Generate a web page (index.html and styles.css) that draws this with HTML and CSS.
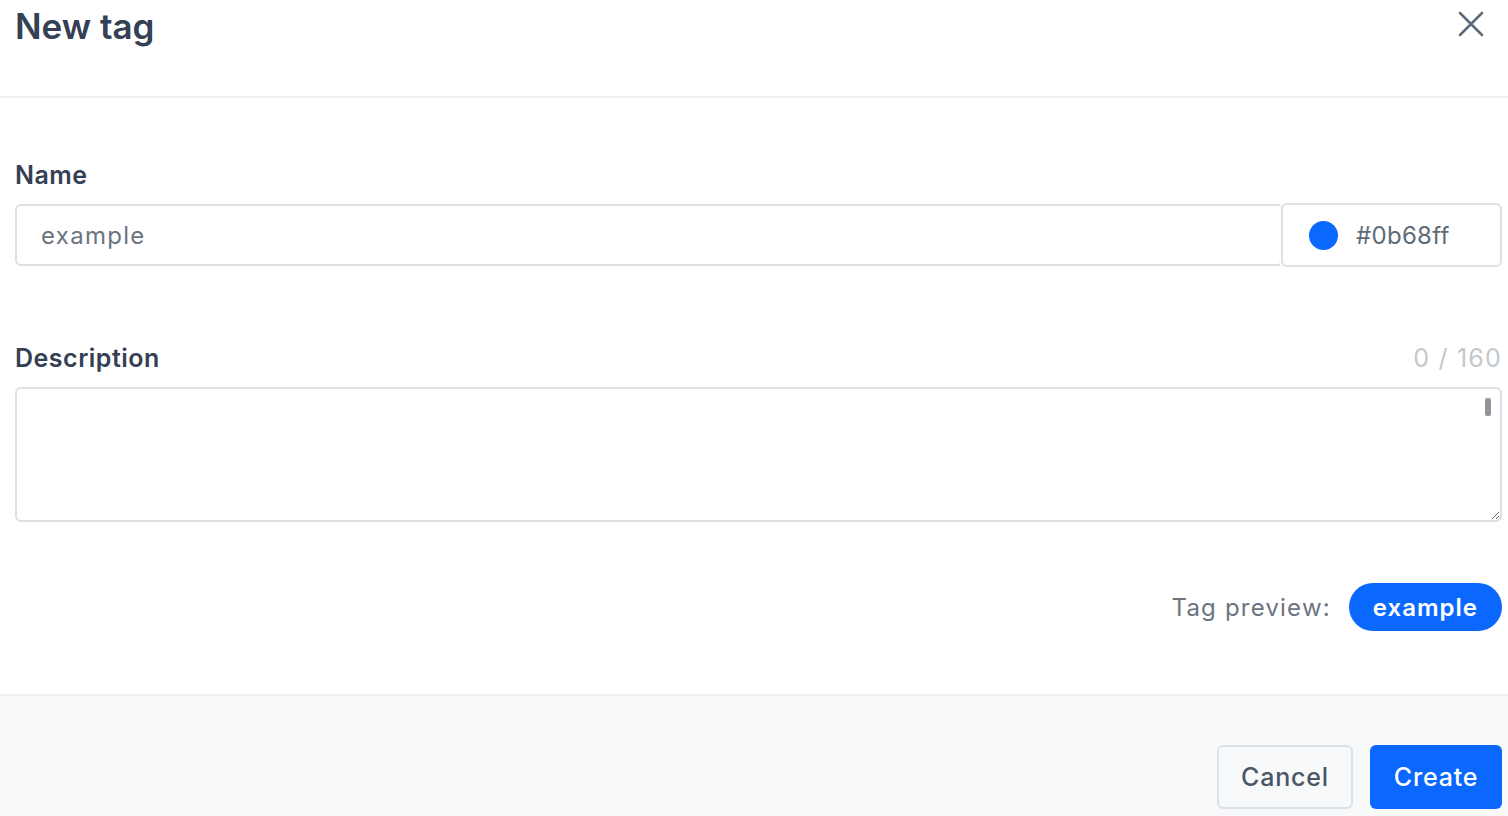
FILE: index.html
```html
<!DOCTYPE html>
<html lang="en">

<head>
    <meta charset="UTF-8">
    <meta name="viewport" content="width=device-width, initial-scale=1.0">
    <title>New tag</title>
    <link rel="stylesheet" href="styles.css">
</head>

<body>
    <div class="modal">
        <div class="modal-header">
            <h1 class="modal-title">New tag</h1>
            <button class="close-btn" aria-label="Close">
                <svg width="26" height="26" viewBox="0 0 26 26">
                    <path d="M2 2 L24 24 M24 2 L2 24" stroke="#5f6b78" stroke-width="2.6" stroke-linecap="round" fill="none" />
                </svg>
            </button>
        </div>

        <div class="modal-body">
            <div class="field">
                <div class="field-head">
                    <label class="label">Name</label>
                </div>
                <div class="name-row">
                    <input class="input name-input" type="text" placeholder="example">
                    <div class="color-box">
                        <span class="color-dot"></span>
                        <span class="color-value">#0b68ff</span>
                    </div>
                </div>
            </div>

            <div class="field field-desc">
                <div class="field-head">
                    <label class="label">Description</label>
                    <span class="counter">0 / 160</span>
                </div>
                <div class="textarea-wrap">
                    <textarea class="input textarea"></textarea>
                    <span class="scroll-thumb"></span>
                </div>
            </div>

            <div class="preview">
                <span class="preview-label">Tag preview:</span>
                <span class="tag">example</span>
            </div>
        </div>

        <div class="modal-footer">
            <button class="btn btn-cancel">Cancel</button>
            <button class="btn btn-create">Create</button>
        </div>
    </div>
</body>

</html>
```

FILE: styles.css
```css
* {
    margin: 0;
    padding: 0;
    box-sizing: border-box;
}

body {
    width: 100vw;
    height: 100vh;
    overflow: hidden;
    background: #fff;
    font-family: Inter, "Noto Sans", sans-serif;
    color: #374151;
}

.modal {
    display: flex;
    flex-direction: column;
    height: 100%;
}

/* 头部 */
.modal-header {
    display: flex;
    justify-content: space-between;
    align-items: flex-start;
    height: 98px;
    padding: 0 24px 0 15px;
    border-bottom: 2px solid #f1f2f4;
}

.modal-title {
    font-size: 35px;
    font-weight: 600;
    line-height: 52px;
    color: #344054;
}

.close-btn {
    margin-top: 11px;
    border: 0;
    background: none;
    cursor: pointer;
}

/* 表单 */
.modal-body {
    padding: 60px 6px 0 15px;
}

.field-head {
    display: flex;
    justify-content: space-between;
    align-items: center;
    height: 34px;
    margin-bottom: 12px;
}

.label {
    font-size: 25px;
    font-weight: 600;
    color: #344054;
    letter-spacing: 0.5px;
}

.counter {
    font-size: 25px;
    color: #c3c8cd;
    letter-spacing: 1.2px;
}

.name-row {
    display: flex;
}

.input {
    font-family: inherit;
    font-size: 24px;
    border: 2px solid #dde1e5;
    border-radius: 6px;
    outline: none;
    color: #374151;
}

.input::placeholder {
    color: #6b7480;
    letter-spacing: 1.3px;
}

.name-input {
    flex: 1;
    height: 62px;
    padding: 0 24px;
    border-radius: 6px 0 0 6px;
}

.color-box {
    display: flex;
    align-items: center;
    width: 221px;
    height: 64px;
    margin-top: -1px;
    padding-left: 26px;
    border: 2px solid #dde1e5;
    border-radius: 6px;
    box-shadow: -2px 0 0 #fff;
}

.color-dot {
    width: 29px;
    height: 29px;
    border-radius: 50%;
    background: #0b68ff;
}

.color-value {
    margin-left: 18px;
    font-size: 24px;
    color: #5f6b78;
    letter-spacing: 0.3px;
}

.field-desc {
    margin-top: 74px;
}

.textarea-wrap {
    position: relative;
}

.textarea {
    display: block;
    width: 100%;
    height: 135px;
    resize: vertical;
    overflow: hidden;
}

/* 模拟滚动条 */
.scroll-thumb {
    position: absolute;
    top: 11px;
    right: 11px;
    width: 6px;
    height: 18px;
    border-radius: 2px;
    background: #8e959c;
}

.preview {
    display: flex;
    justify-content: flex-end;
    align-items: center;
    margin-top: 61px;
    gap: 18px;
}

.preview-label {
    font-size: 24px;
    color: #6b7480;
    letter-spacing: 1.2px;
}

.tag {
    display: inline-flex;
    align-items: center;
    height: 48px;
    padding: 0 24px;
    border-radius: 24px;
    background: #0b68ff;
    color: #fff;
    font-size: 24px;
    font-weight: 600;
    letter-spacing: 1px;
}

/* 底部 */
.modal-footer {
    display: flex;
    justify-content: flex-end;
    gap: 17px;
    flex: 1;
    margin-top: 63px;
    padding: 49px 6px 0 0;
    background: #f8f9fa;
    border-top: 2px solid #f1f2f4;
}

.btn {
    height: 64px;
    padding: 0 20px;
    border-radius: 6px;
    font-family: inherit;
    font-size: 25px;
    font-weight: 500;
    letter-spacing: 0.8px;
    cursor: pointer;
}

.btn-cancel {
    width: 136px;
    border: 2px solid #dde1e5;
    background: #f8f9fa;
    color: #4b5563;
}

.btn-create {
    width: 132px;
    border: 0;
    background: #0b68ff;
    color: #fff;
}
```
